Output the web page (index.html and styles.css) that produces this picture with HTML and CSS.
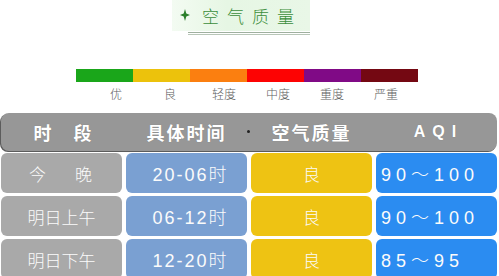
FILE: index.html
```html
<!DOCTYPE html>
<html lang="zh">
<head>
<meta charset="utf-8">
<link rel="stylesheet" href="styles.css">
</head>
<body>
<div class="title-wrap">
  <div class="title">
    <svg class="star" width="10" height="12" viewBox="0 0 10 12"><path d="M5 0 L6.3 4.6 L10 6 L6.3 7.4 L5 12 L3.7 7.4 L0 6 L3.7 4.6 Z" fill="#2a7f2a"/></svg>
    <span class="title-text">空气质量</span>
  </div>
  <div class="underline"></div>
</div>

<div class="scale">
  <div class="seg green"></div>
  <div class="seg yellow"></div>
  <div class="seg orange"></div>
  <div class="seg red"></div>
  <div class="seg purple"></div>
  <div class="seg maroon"></div>
</div>
<div class="labels">
  <span>优</span><span>良</span><span>轻度</span><span>中度</span><span>重度</span><span>严重</span>
</div>

<div class="table">
  <div class="head">
    <div class="hcell">时&emsp;段</div>
    <div class="hcell">具体时间</div>
    <div class="hcell">空气质量</div>
    <div class="hcell aqi">AQI</div>
    <span class="dot"></span>
  </div>
  <div class="cell c1 spaced">今&emsp;晚</div>
  <div class="cell c2">20-06时</div>
  <div class="cell c3">良</div>
  <div class="cell c4">90～100</div>
  <div class="cell c1">明日上午</div>
  <div class="cell c2">06-12时</div>
  <div class="cell c3">良</div>
  <div class="cell c4">90～100</div>
  <div class="cell c1">明日下午</div>
  <div class="cell c2">12-20时</div>
  <div class="cell c3">良</div>
  <div class="cell c4">85～95</div>
</div>
</body>
</html>
```
FILE: styles.css
```css
html, body {
  margin: 0;
  padding: 0;
  background: #ffffff;
  font-family: "Noto Sans CJK SC", "Noto Sans", sans-serif;
  width: 499px;
  height: 276px;
  overflow: hidden;
}

.title-wrap {
  margin-left: 172px;
  width: 138px;
  height: 36px;
}

.title {
  height: 31px;
  display: flex;
  align-items: center;
  background: linear-gradient(90deg, #f3fbf2 0%, #e6f6e4 40%, #e9f7e7 100%);
}

.star {
  margin-left: 8px;
  margin-top: -2px;
}

.title-text {
  margin-left: 12px;
  font-family: "Noto Sans CJK SC", serif;
  font-weight: 300;
  font-size: 17px;
  letter-spacing: 8px;
  color: #3b8d3b;
  margin-top: -1px;
}

.underline {
  margin-left: 16px;
  margin-top: 1px;
  height: 1px;
  border-top: 1px solid #9fb09f;
  border-bottom: 1px solid #b8c6b8;
}

.scale {
  display: flex;
  margin-left: 76px;
  margin-top: 33px;
  width: 342px;
  height: 13px;
}

.seg { flex: 1; }
.green { background: #1aa61a; }
.yellow { background: #ecc20c; }
.orange { background: #fb7f10; }
.red { background: #fd0303; }
.purple { background: #800a86; }
.maroon { background: #740812; }

.labels {
  display: grid;
  grid-template-columns: repeat(6, 54px);
  margin-left: 89px;
  margin-top: 5px;
  height: 14px;
  font-size: 12px;
  line-height: 14px;
  color: #5e5e5e;
  font-weight: 300;
}

.labels span {
  text-align: center;
}

.table {
  display: grid;
  grid-template-columns: repeat(4, 121px);
  column-gap: 4px;
  row-gap: 3px;
  grid-template-rows: 37px 40px 40px 40px;
  margin-left: 1px;
  margin-top: 12px;
}

.head {
  grid-column: 1 / -1;
  display: grid;
  grid-template-columns: repeat(4, 121px);
  column-gap: 4px;
  background: #979797;
  border-radius: 8px;
  box-shadow: -1px 1px 0 #5c5c5c;
  position: relative;
  margin-bottom: -1px;
}

.hcell {
  display: flex;
  align-items: center;
  justify-content: center;
  color: #ffffff;
  font-weight: 700;
  font-size: 18px;
  letter-spacing: 2px;
  text-shadow: 0 0 1px rgba(0,0,0,0.2);
}

.hcell:first-child { padding-left: 4px; }

.hcell.aqi {
  font-family: "Liberation Sans", sans-serif;
  font-size: 16px;
  letter-spacing: 7px;
  padding-left: 4px;
}

.dot {
  position: absolute;
  left: 246px;
  top: 17px;
  width: 3px;
  height: 3px;
  border-radius: 50%;
  background: #222;
}

.cell {
  display: flex;
  align-items: center;
  justify-content: center;
  border-radius: 6px;
  color: #fbfbfb;
  font-size: 17px;
  font-weight: 300;
}

.c1 { background: #a9a9a9; }
.c1.spaced { letter-spacing: 6px; padding-left: 4px; }
.c2 {
  background: #7aa0d2;
  font-family: "Liberation Sans", "Noto Sans CJK SC", sans-serif;
  font-size: 18px;
  letter-spacing: 2px;
  padding-left: 8px;
}
.c3 { background: #eec313; }
.c4 {
  background: #2b8cf1;
  justify-content: flex-start;
  padding-left: 5px;
  font-family: "Liberation Sans", "Noto Sans CJK SC", sans-serif;
  font-size: 18px;
  letter-spacing: 5px;
}
```
